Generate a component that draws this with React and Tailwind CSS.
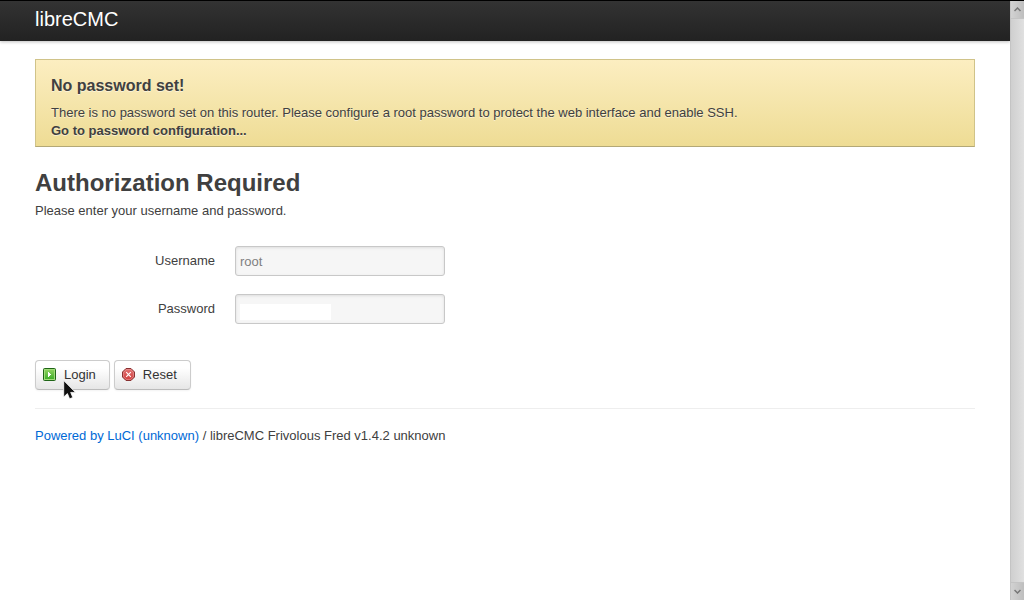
function LoginIcon() {
  return (
    <svg width="13" height="14" viewBox="0 0 13 14" aria-hidden="true">
      <defs>
        <linearGradient id="green" x1="0" y1="0" x2="0" y2="1">
          <stop offset="0" stopColor="#8ad05c" />
          <stop offset="1" stopColor="#3fae2a" />
        </linearGradient>
      </defs>
      <rect x="0.5" y="0.5" width="12" height="12" rx="1" fill="#8fd070" stroke="#1f6416" />
      <rect x="2" y="2" width="9" height="9" fill="url(#green)" />
      <path d="M1.5 11.5V1.5H11.5V11.5Z" fill="none" stroke="#a5e07e" strokeOpacity="0.8" />
      <path d="M5 4H6V5H7V6H8V7H7V8H6V9H5Z" fill="#ffffff" shapeRendering="crispEdges" />
    </svg>
  );
}

function ResetIcon() {
  return (
    <svg width="13" height="14" viewBox="0 0 13 14" aria-hidden="true">
      <defs>
        <linearGradient id="red" x1="0" y1="0" x2="0" y2="1">
          <stop offset="0" stopColor="#e27474" />
          <stop offset="1" stopColor="#d03e3e" />
        </linearGradient>
      </defs>
      <path d="M4 0.5H9L12.5 4V9L9 12.5H4L0.5 9V4Z" fill="url(#red)" stroke="#873030" />
      <path d="M4.4 1.5H8.6L11.5 4.4V8.6L8.6 11.5H4.4L1.5 8.6V4.4Z" fill="none" stroke="#ec9a9a" strokeOpacity="0.55" />
      <path d="M4.2 4.2L8.8 8.8M8.8 4.2L4.2 8.8" stroke="#ffffff" strokeWidth="1.1" />
    </svg>
  );
}

const fieldClass =
  "block h-[30px] w-[210px] rounded-[3px] border border-[#c8c8c8] bg-[#f6f6f6] px-1 text-[13px] text-[#808080] shadow-[inset_0_1px_3px_rgba(0,0,0,0.1)] outline-none";

const buttonClass =
  "flex h-[30px] items-center gap-2 rounded-[4px] border border-[#cccccc] border-b-[#bbbbbb] bg-linear-to-b from-white from-25% to-[#e6e6e6] pl-[7px] pr-[13px] text-[13px] leading-[18px] text-[#333333] shadow-[inset_0_1px_0_rgba(255,255,255,0.2),0_1px_2px_rgba(0,0,0,0.05)]";

function Field({ id, label, children }) {
  return (
    <div className="flex items-center gap-5">
      <label htmlFor={id} className="w-[180px] text-right">
        {label}
      </label>
      <div className="relative">{children}</div>
    </div>
  );
}

function Scrollbar() {
  const end =
    "flex h-[18px] items-center justify-center bg-linear-to-r from-[#d2d2d2] to-[#bebebe]";
  return (
    <div
      aria-hidden="true"
      className="flex w-3.5 shrink-0 flex-col justify-between border-l border-[#c4c4c4] bg-linear-to-r from-[#cfcfcf] to-[#e0e0e0]"
    >
      <div className={`${end} border-b border-[#c4c4c4]`}>
        <svg width="7" height="5" viewBox="0 0 7 5" fill="none" stroke="#777777" strokeWidth="1.5">
          <path d="M0.5 4L3.5 1L6.5 4" />
        </svg>
      </div>
      <div className={`${end} border-t border-[#c4c4c4]`}>
        <svg width="7" height="5" viewBox="0 0 7 5" fill="none" stroke="#777777" strokeWidth="1.5">
          <path d="M0.5 1L3.5 4L6.5 1" />
        </svg>
      </div>
    </div>
  );
}

export default function App() {
  return (
    <div className="flex min-h-screen border-t border-black bg-white font-['Liberation_Sans',Arial,sans-serif] text-[13px] leading-[18px] text-[#404040]">
      <div className="min-w-0 flex-1">
        <header className="h-10 bg-linear-to-b from-[#333333] to-[#222222] shadow-[0_1px_3px_rgba(0,0,0,0.25)]">
          <div className="mx-auto flex h-9 max-w-[940px] items-center">
            <a href="#" className="text-xl leading-5 text-white">
              libreCMC
            </a>
          </div>
        </header>

        <main className="mx-auto max-w-[940px] pt-[18px]">
          <div className="border border-[#d0c389] border-b-[#b3a876] bg-linear-to-b from-[#fceec1] to-[#eedc94] px-[15px] pt-2 pb-1.5 [text-shadow:0_1px_0_rgba(255,255,255,0.5)]">
            <h4 className="text-base leading-9 font-bold">No password set!</h4>
            <p>
              There is no password set on this router. Please configure a root password to protect
              the web interface and enable SSH.
            </p>
            <a href="#password" className="block font-bold">
              Go to password configuration...
            </a>
          </div>

          <form className="mt-[18px]" onSubmit={(e) => e.preventDefault()}>
            <h2 className="text-2xl leading-9 font-bold">Authorization Required</h2>
            <p className="leading-5">Please enter your username and password.</p>

            <div className="mt-[25px] flex flex-col gap-[18px]">
              <Field id="username" label="Username">
                <input id="username" type="text" defaultValue="root" className={fieldClass} />
              </Field>
              <Field id="password" label="Password">
                <input id="password" type="password" className={fieldClass} />
                <span className="pointer-events-none absolute top-2.5 left-[5px] h-4 w-[91px] bg-white" />
              </Field>
            </div>

            <div className="mt-9 flex gap-1">
              <div className="relative">
                <button type="submit" className={buttonClass}>
                  <LoginIcon />
                  Login
                </button>
                <svg
                  className="pointer-events-none absolute top-5 left-7"
                  width="13"
                  height="20"
                  viewBox="0 0 13 20"
                  aria-hidden="true"
                >
                  <path
                    d="M0.7 0.5V17L4.4 13.6L6.6 18.8L9.8 17.5L7.7 12.4H12.5Z"
                    fill="#111111"
                    stroke="#ffffff"
                    strokeWidth="0.8"
                  />
                </svg>
              </div>
              <button type="reset" className={buttonClass}>
                <ResetIcon />
                Reset
              </button>
            </div>
          </form>

          <footer className="mt-[18px] border-t border-[#eeeeee] py-[18px]">
            <a href="#luci" className="text-[#0069d6]">
              Powered by LuCI (unknown)
            </a>{" "}
            / libreCMC Frivolous Fred v1.4.2 unknown
          </footer>
        </main>
      </div>
      <Scrollbar />
    </div>
  );
}
